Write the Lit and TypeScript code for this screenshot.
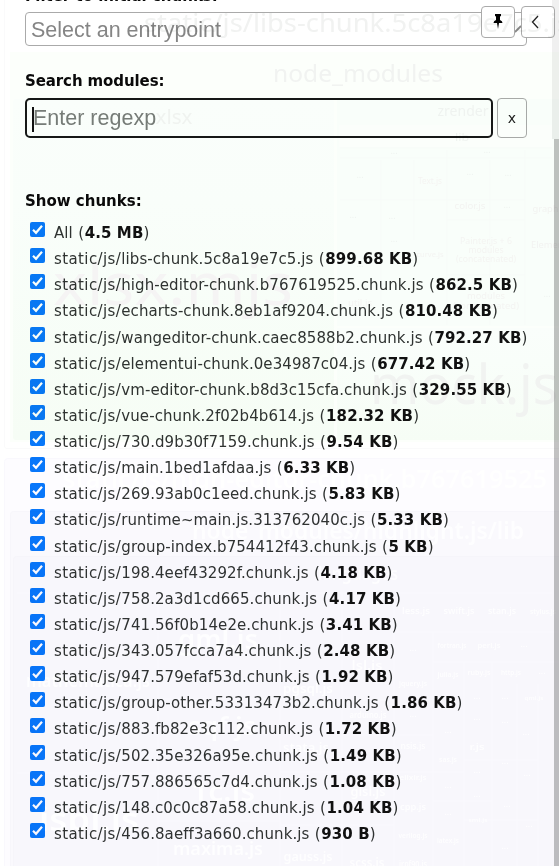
import { LitElement, html, svg, css } from "lit";
import { customElement } from "lit/decorators.js";

const CHUNKS: [string, string][] = [
  ["libs-chunk.5c8a19e7c5.js", "899.68 KB"],
  ["high-editor-chunk.b767619525.chunk.js", "862.5 KB"],
  ["echarts-chunk.8eb1af9204.chunk.js", "810.48 KB"],
  ["wangeditor-chunk.caec8588b2.chunk.js", "792.27 KB"],
  ["elementui-chunk.0e34987c04.js", "677.42 KB"],
  ["vm-editor-chunk.b8d3c15cfa.chunk.js", "329.55 KB"],
  ["vue-chunk.2f02b4b614.js", "182.32 KB"],
  ["730.d9b30f7159.chunk.js", "9.54 KB"],
  ["main.1bed1afdaa.js", "6.33 KB"],
  ["269.93ab0c1eed.chunk.js", "5.83 KB"],
  ["runtime~main.js.313762040c.js", "5.33 KB"],
  ["group-index.b754412f43.chunk.js", "5 KB"],
  ["198.4eef43292f.chunk.js", "4.18 KB"],
  ["758.2a3d1cd665.chunk.js", "4.17 KB"],
  ["741.56f0b14e2e.chunk.js", "3.41 KB"],
  ["343.057fcca7a4.chunk.js", "2.48 KB"],
  ["947.579efaf53d.chunk.js", "1.92 KB"],
  ["group-other.53313473b2.chunk.js", "1.86 KB"],
  ["883.fb82e3c112.chunk.js", "1.72 KB"],
  ["502.35e326a95e.chunk.js", "1.49 KB"],
  ["757.886565c7d4.chunk.js", "1.08 KB"],
  ["148.c0c0c87a58.chunk.js", "1.04 KB"],
  ["456.8aeff3a660.chunk.js", "930 B"],
];

// Treemap labels: text, centre x, baseline y, rendered width, font size, fill
const LABELS: [string, number, number, number, number, string][] = [
  ["static/js/libs-chunk.5c8a19e7c5.js", 357, 32, 426, 26, "#f1f2f1"],
  ["node_modules", 358, 82, 170, 24, "#f1f3f1"],
  ["xlsx", 174, 124, 37, 20, "#f0f3f0"],
  ["xlsx.mjs", 173, 305, 240, 59, "#f5f4f4"],
  ["zrender", 463, 116, 51, 14, "#eff3f0"],
  ["lib", 462, 141, 14, 11, "#eff3f0"],
  ["Text.js", 430, 184, 24, 8, "#f5f4f2"],
  ["color.js", 470, 209, 31, 9, "#f3f3f1"],
  ["graphic", 549, 212, 33, 9, "#f3f3f1"],
  ["Painter.js + 6", 486, 244, 52, 8, "#f4f4f2"],
  ["modules", 486, 253, 35, 8, "#f4f4f2"],
  ["(concatenated)", 486, 262, 60, 8, "#f4f4f2"],
  ["Element", 549, 248, 36, 9, "#f3f3f1"],
  ["curve.js", 430, 257, 27, 7, "#f4f4f2"],
  ["util.js", 360, 306, 24, 9, "#f4f4f2"],
  ["modules", 486, 299, 38, 8, "#f4f4f2"],
  ["(concatenated)", 486, 309, 66, 8, "#f4f4f2"],
  ["mock.js", 464, 404, 188, 55, "#f1f3f1"],
  ["static/js/high-editor-chunk.b767619525", 305, 488, 484, 25, "#ffffff"],
  ["node_modules/highlight.js/lib", 358, 539, 332, 24, "#ffffff"],
  ["languages", 358, 580, 80, 17, "#ffffff"],
  ["less.js", 416, 614, 28, 8, "#ffffff"],
  ["swift.js", 459, 614, 31, 8, "#ffffff"],
  ["stan.js", 502, 614, 28, 8, "#ffffff"],
  ["stylus.js", 543, 614, 26, 7, "#ffffff"],
  ["gml.js", 218, 649, 80, 27, "#ffffff"],
  ["fortran.js", 452, 648, 29, 7, "#ffffff"],
  ["perl.js", 489, 648, 23, 7, "#ffffff"],
  ["mathematica.js", 88, 687, 124, 17, "#ffffff"],
  ["pgsql.js", 308, 693, 50, 13, "#ffffff"],
  ["lsl.js", 367, 670, 31, 12, "#ffffff"],
  ["julia.js", 448, 677, 21, 7, "#ffffff"],
  ["ruby.js", 479, 675, 23, 7, "#ffffff"],
  ["http.js", 511, 675, 20, 7, "#ffffff"],
  ["jquery.js", 413, 686, 28, 7, "#ffffff"],
  ["qml.js", 534, 700, 19, 6, "#ffffff"],
  ["arduino.js", 368, 718, 37, 8, "#ffffff"],
  ["sqf.js", 222, 735, 68, 26, "#ffffff"],
  ["stata.js", 306, 752, 46, 13, "#ffffff"],
  ["nsis.js", 413, 749, 25, 8, "#ffffff"],
  ["r.js", 477, 750, 15, 9, "#ffffff"],
  ["sas.js", 448, 762, 18, 7, "#ffffff"],
  ["1c.js", 223, 801, 64, 27, "#ffffff"],
  ["glsl.js", 368, 796, 35, 12, "#ffffff"],
  ["cpp.js", 413, 810, 26, 8, "#ffffff"],
  ["elixir.js", 413, 780, 27, 7, "#ffffff"],
  ["sml.js", 478, 822, 19, 6, "#ffffff"],
  ["isbl.js", 89, 831, 100, 32, "#ffffff"],
  ["maxima.js", 218, 855, 90, 18, "#ffffff"],
  ["verilog.js", 413, 838, 29, 7, "#ffffff"],
  ["latex.js", 448, 843, 22, 7, "#ffffff"],
  ["gauss.js", 308, 861, 49, 13, "#ffffff"],
  ["scss.js", 367, 867, 35, 12, "#ffffff"],
  ["irpf90.js", 413, 867, 28, 8, "#ffffff"],
];

// Small tiles whose names are elided
const DOTS: [number, number][] = [
  [394, 154], [487, 153], [360, 178], [470, 175], [508, 176], [353, 218], [392, 219],
  [507, 208], [394, 242], [360, 267], [547, 297], [413, 651], [524, 647], [542, 674],
  [477, 699], [505, 699], [413, 717], [477, 720], [448, 733], [505, 723], [526, 735],
  [505, 764], [477, 773], [527, 776], [448, 788], [477, 797], [507, 807], [448, 815],
  [529, 827], [505, 849],
];

@customElement("tree-map")
class TreeMap extends LitElement {
  static styles = css`
    :host { display: block; }
    svg { display: block; font-family: "Noto Sans", "Open Sans", sans-serif; }
    .strong { font-weight: 600; fill-opacity: 0.8; }
  `;
  render() {
    return html`<svg width="559" height="866" viewBox="0 0 559 866" aria-hidden="true">
      <defs>
        <linearGradient id="g" x1="0" y1="0" x2="0" y2="1">
          <stop offset="0" stop-color="#fafefb" /><stop offset="0.3" stop-color="#f9fefa" />
          <stop offset="1" stop-color="#f6fdf5" />
        </linearGradient>
      </defs>
      <path d="M4.5 0V446Q4.5 448.500 7 448.500H559" fill="none" stroke="#fafafb" />
      <rect x="10" y="52" width="549" height="390" fill="#fcfffb" />
      <rect x="13" y="99" width="321" height="341" rx="3" fill="url(#g)" />
      <rect x="337" y="99" width="222" height="227" fill="#f9fefa" />
      <rect x="337" y="328" width="222" height="112" fill="url(#g)" />
      <rect x="339" y="125" width="213" height="22" fill="#fbfefb" />
      <path d="M340 148H552M340 158H552M381 160V320M414 160V240M447 150V325M490 160V325M525 150V325M340 200H525M447 220H525M447 275H525"
        fill="none" stroke="#f7fbf8" />
      <rect x="4.500" y="458.500" width="560" height="420" rx="3" fill="#fdfcff" stroke="#f9f8fd" />
      <rect x="10.500" y="511.500" width="555" height="365" rx="3" fill="#faf9fd" stroke="#f7f6fb" />
      <rect x="13.500" y="556.500" width="550" height="320" rx="3" fill="#f8f7fc" stroke="#f6f5fa" />
      <path d="M17 593H552M158 594V866M17 773H158M158 699H280M158 780H280M158 821H280M280 594V866M342 594V866M394 594V866M433 632V866M464 662V866M492 662V866M517 684V866M538 684V866M394 632H559M433 662H559M342 700H394M342 735H433M394 772H464M280 772H394M280 825H394M433 801H492M464 760H538M464 820H538"
        fill="none" stroke="#faf9fe" />
      ${LABELS.map(([t, x, y, w, s, c]) => svg`<text class=${y > 470 ? "strong" : ""} x=${x} y=${y} text-anchor="middle"
        textLength=${w} lengthAdjust="spacingAndGlyphs" font-size=${s} fill=${c}>${t}</text>`)}
      ${DOTS.map(([x, y]) => svg`<text x=${x} y=${y} text-anchor="middle" font-size="9" fill=${y > 458 ? "#fff" : "#eff3f0"}>...</text>`)}
    </svg>`;
  }
}

@customElement("chunk-row")
class ChunkRow extends LitElement {
  static properties = { folder: {}, name: {}, size: {} };
  declare folder: string;
  declare name: string;
  declare size: string;
  static styles = css`
    :host { display: flex; height: 26.130px; padding-left: 5px; white-space: pre; }
    .box { flex: none; width: 15px; height: 15px; margin: 0 9px 0 0; }
    .text { line-height: 22px; }
    .folder { letter-spacing: 0.4px; }
    .name { letter-spacing: 0.080px; }
    .paren { letter-spacing: 0.6px; }
    b { color: #111; letter-spacing: 0.100px; }
  `;
  render() {
    return html`<svg class="box" viewBox="0 0 15 15" role="checkbox" aria-checked="true">
        <rect width="15" height="15" rx="2" fill="#0878fa" />
        <path d="M3 7.800L6 10.800L12 3.700" fill="none" stroke="#fff" stroke-width="2.200" />
      </svg><span class="text"><span class="folder">${this.folder}</span><span class="name">${this.name}</span><span class="paren"> (</span><b>${this.size}</b>)</span>`;
  }
}

@customElement("app-root")
class AppRoot extends LitElement {
  static styles = css`
    :host {
      display: block; position: relative; width: 559px; height: 866px; overflow: hidden;
      background: #fff; color: #303332; font: 15px "DejaVu Sans", Verdana, sans-serif;
    }
    * { box-sizing: border-box; }
    /* The map shows faintly through every control, so it is blended over them. */
    tree-map { position: absolute; inset: 0; mix-blend-mode: multiply; pointer-events: none; }
    .sidebar { padding: 0 32px 0 25px; height: 866px; overflow: hidden; }
    .title { color: #0a0a0a; font-weight: bold; font-size: 15px; line-height: 18px; white-space: nowrap; }
    .title.first { margin-top: -13px; }
    .title.search { margin-top: 26px; letter-spacing: -0.1px; }
    .title.chunks { margin-top: 54px; margin-bottom: 12px; }
    .field {
      font: 21.500px/30px "Liberation Sans", Arial, sans-serif; color: #858585;
      border: 1px solid #aaa; border-radius: 4px; padding-left: 5px; height: 34px; white-space: nowrap;
    }
    .entry { margin-top: 7px; line-height: 34px; }
    .search-row { display: flex; gap: 4px; margin-top: 8px; }
    .regexp {
      flex: 1; display: flex; align-items: center; height: 40px; border: 2px solid #161817;
      border-radius: 5px; color: #787c79; padding: 0 0 1px 6px;
    }
    .caret { width: 2px; height: 25px; background: #111; margin: 3px -1px 0 -1px; }
    .clear { width: 30px; height: 40px; }
    .btn {
      display: flex; align-items: center; justify-content: center; border: 1px solid #aaa;
      border-radius: 4px; color: #222; font-size: 14px; background: #fff;
    }
    .tools { position: absolute; top: 6px; left: 481px; display: flex; gap: 6px; }
    .tools .btn { width: 34px; height: 32px; }
    .tools .btn svg { margin-right: 4px; }
    .tools .pin svg { margin-right: 1px; }
    .grip { position: absolute; left: 514px; top: 25px; }
    .track { position: absolute; left: 552px; top: 0; width: 7px; height: 139px; background: rgba(0, 0, 0, 0.060); }
    .thumb { position: absolute; left: 554px; top: 139px; width: 5px; bottom: 0; background: rgba(0, 0, 0, 0.240); }
  `;
  render() {
    return html`
      <main class="sidebar">
        <div class="title first">Filter to initial chunks:</div>
        <div class="field entry">Select an entrypoint</div>
        <div class="title search">Search modules:</div>
        <div class="search-row">
          <div class="field regexp"><span class="caret"></span><span>Enter regexp</span></div>
          <div class="btn clear">x</div>
        </div>
        <div class="title chunks">Show chunks:</div>
        <chunk-row .folder=${""} .name=${"All"} .size=${"4.5 MB"}></chunk-row>
        ${CHUNKS.map(([name, size]) => html`<chunk-row .folder=${"static/js/"} .name=${name} .size=${size}></chunk-row>`)}
      </main>
      <div class="track"></div><div class="thumb"></div>
      <svg class="grip" width="8" height="9" viewBox="0 0 8 9"><path d="M1 7L7 1" stroke="#888" stroke-width="1.800" /></svg>
      <div class="tools">
        <div class="btn pin"><svg width="12" height="18" viewBox="0 0 12 18"><path d="M3 1H9V3L8 3.500V7Q10.500 8 10.500 10H7L6 16L5 10H1.500Q1.500 8 4 7V3.500L3 3Z" fill="#000" /></svg></div>
        <div class="btn"><svg width="12" height="14" viewBox="0 0 12 14"><path d="M8 1L2.500 7L8 13" fill="none" stroke="#222" stroke-width="1.300" /></svg></div>
      </div>
      <tree-map></tree-map>`;
  }
}
